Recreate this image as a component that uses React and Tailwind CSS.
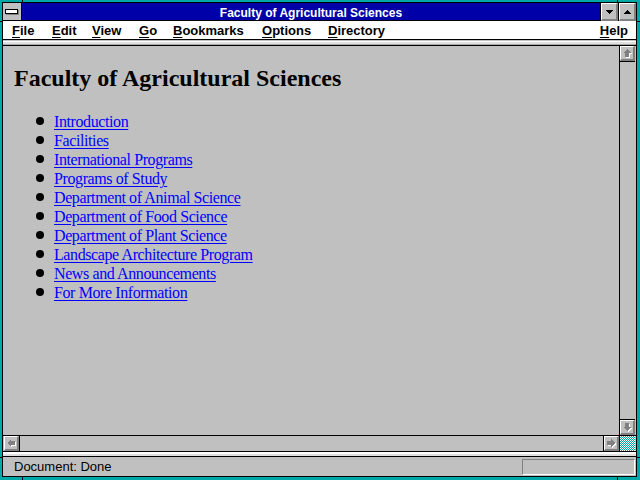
import React from 'react';

const links = [
  'Introduction',
  'Facilities',
  'International Programs',
  'Programs of Study',
  'Department of Animal Science',
  'Department of Food Science',
  'Department of Plant Science',
  'Landscape Architecture Program',
  'News and Announcements',
  'For More Information',
];

const menus = [
  ['F', 'ile', 'w-[40px]'],
  ['E', 'dit', 'w-[40px]'],
  ['V', 'iew', 'w-[47px]'],
  ['G', 'o', 'w-[34px]'],
  ['B', 'ookmarks', 'w-[89px]'],
  ['O', 'ptions', 'w-[66px]'],
  ['D', 'irectory', 'w-[70px]'],
];

// grey "disabled" arrow used in the scroll buttons
const arrows = {
  up: '7,3 11,7 9,7 9,11 5,11 5,7 3,7',
  down: '7,11 11,7 9,7 9,3 5,3 5,7 3,7',
  left: '3,7 7,3 7,5 11,5 11,9 7,9 7,11',
  right: '11,7 7,3 7,5 3,5 3,9 7,9 7,11',
};

function ScrollButton({ dir }) {
  return (
    <div className="w-[15px] h-[15px] shrink-0 bg-[#c0c0c0] border-t border-l border-white border-r-2 border-b-2 border-r-[#808080] border-b-[#808080] relative">
      <svg width="15" height="15" viewBox="0 0 15 15" className="absolute -top-px -left-px" shapeRendering="crispEdges">
        <polygon points={arrows[dir]} fill="#ffffff" transform="translate(1 1)" />
        <polygon points={arrows[dir]} fill="#808080" />
      </svg>
    </div>
  );
}

function CaptionButton({ up }) {
  return (
    <div className="w-[17px] h-[18px] bg-[#c0c0c0] border-t border-l border-white border-r-2 border-b-2 border-r-[#808080] border-b-[#808080] flex items-center justify-center">
      <svg width="7" height="4" viewBox="0 0 7 4" shapeRendering="crispEdges">
        {up ? <polygon points="3.5,0 7,4 0,4" fill="#000" /> : <polygon points="0,0 7,0 3.5,4" fill="#000" />}
      </svg>
    </div>
  );
}

export default function App() {
  return (
    <div className="w-[640px] h-[480px] bg-[#00a8a8] pt-[2px] pl-[2px] pr-[3px] pb-[3px] relative font-['Liberation_Sans',Arial,sans-serif]">
      {/* resize corner marks */}
      <div className="absolute top-0 left-[22px] w-px h-[2px] bg-black" />
      <div className="absolute top-0 left-[617px] w-px h-[2px] bg-black" />
      <div className="absolute bottom-0 left-[22px] w-px h-[3px] bg-black" />
      <div className="absolute bottom-0 left-[617px] w-px h-[3px] bg-black" />
      <div className="absolute left-0 top-[21px] w-[2px] h-px bg-black" />
      <div className="absolute left-0 top-[457px] w-[2px] h-px bg-black" />
      <div className="absolute right-0 top-[21px] w-[3px] h-px bg-black" />
      <div className="absolute right-0 top-[457px] w-[3px] h-px bg-black" />

      <div className="w-full h-full border border-black flex flex-col bg-[#c0c0c0]">
        {/* title bar */}
        <div className="h-[18px] flex border-b border-black">
          <div className="w-[19px] bg-[#c0c0c0] border-r border-black flex items-center justify-center">
            <div className="w-[13px] h-[5px] bg-white border border-black shadow-[1px_1px_0_#808080] ml-[-1px]" />
          </div>
          <div className="flex-1 bg-[#0000a8] flex items-center justify-center pt-[2px] text-white font-bold text-[12px] leading-none">
            Faculty of Agricultural Sciences
          </div>
          <div className="border-l border-black">
            <CaptionButton />
          </div>
          <div className="border-l border-black">
            <CaptionButton up />
          </div>
        </div>

        {/* menu bar */}
        <div className="h-[19px] bg-white border-b border-black flex items-center pt-[2px] pl-[9px] pr-[8px] text-[13px] font-bold text-black">
          {menus.map(([k, rest, w]) => (
            <span key={k + rest} className={w}>
              <span className="underline underline-offset-2">{k}</span>
              {rest}
            </span>
          ))}
          <span className="ml-auto">
            <span className="underline underline-offset-2">H</span>elp
          </span>
        </div>

        {/* collapsed toolbar band */}
        <div className="h-[6px] border-b border-black flex flex-col">
          <div className="h-px bg-[#c0c0c0]" />
          <div className="h-px bg-white" />
          <div className="h-[2px] bg-[#dfdfdf]" />
          <div className="h-px bg-[#a8a8a8]" />
        </div>

        {/* document + vertical scroll */}
        <div className="h-[390px] flex border-b border-black">
          <div className="w-[617px] border-r border-black pt-[20px] pl-[11px] font-['Liberation_Serif','Times_New_Roman',serif]">
            <h1 className="text-[24px] leading-[24px] font-bold text-black">
              Faculty of Agricultural Sciences
            </h1>
            <ul className="mt-[22px]">
              {links.map((t) => (
                <li key={t} className="h-[19px] flex items-center">
                  <span className="w-[8px] h-[8px] rounded-full bg-black ml-[22px] mr-[10px] mt-[-2px]" />
                  <a href="#" className="text-[16px] leading-[19px] text-[#0000ff] underline underline-offset-[2px] tracking-[-0.4px]">
                    {t}
                  </a>
                </li>
              ))}
            </ul>
          </div>
          <div className="w-[15px] flex flex-col">
            <div className="border-b border-black">
              <ScrollButton dir="up" />
            </div>
            <div className="flex-1" />
            <div className="border-t border-black">
              <ScrollButton dir="down" />
            </div>
          </div>
        </div>

        {/* horizontal scroll */}
        <div className="h-[16px] flex border-b border-black">
          <div className="w-[617px] flex border-r border-black pl-px">
            <div className="border-r border-black">
              <ScrollButton dir="left" />
            </div>
            <div className="flex-1" />
            <div className="border-l border-black">
              <ScrollButton dir="right" />
            </div>
          </div>
          <div className="w-[15px] h-[15px] bg-[repeating-conic-gradient(#00a8a8_0_25%,#ffffff_0_50%)] bg-[length:2px_2px]" />
        </div>

        {/* band above status */}
        <div className="h-[5px] border-b border-black flex flex-col">
          <div className="h-[2px] bg-white" />
          <div className="h-[2px] bg-[#dfdfdf]" />
        </div>

        {/* status bar */}
        <div className="flex-1 flex items-center pl-[11px] pr-px">
          <span className="text-[13px] text-black leading-none">Document: Done</span>
          <div className="ml-auto w-[113px] h-[16px] border-t border-l border-[#808080] border-r border-b border-r-white border-b-white" />
        </div>
      </div>
    </div>
  );
}
